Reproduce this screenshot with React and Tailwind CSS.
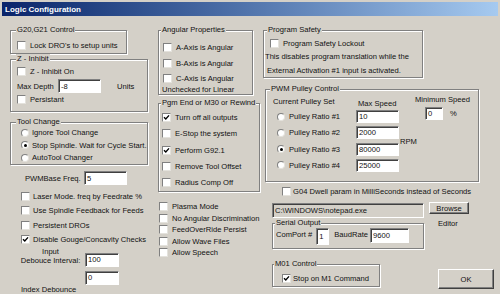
import React from 'react';

const Check = ({ checked }) => (
  <span className="flex w-[9px] h-[9px] shrink-0 items-center justify-center bg-white border border-t-[#808080] border-l-[#808080] border-r-[#e4e2dc] border-b-[#e4e2dc]">
    {checked && (
      <svg viewBox="0 0 7 7" className="w-[7px] h-[7px]">
        <path d="M1 3.2 L2.8 5 L6 1.4" fill="none" stroke="#000" strokeWidth="1.4" />
      </svg>
    )}
  </span>
);

const CheckRow = ({ label, checked, gap = 'gap-[4px]' }) => (
  <div className={`flex items-center whitespace-nowrap ${gap}`}>
    <Check checked={checked} />
    <span>{label}</span>
  </div>
);

const Radio = ({ checked }) => (
  <span className="flex w-[8px] h-[8px] shrink-0 items-center justify-center rounded-full bg-white border border-t-[#808080] border-l-[#808080] border-r-[#e4e2dc] border-b-[#e4e2dc]">
    {checked && <span className="w-[3px] h-[3px] rounded-full bg-black" />}
  </span>
);

const Field = ({ value, className = '' }) => (
  <div className={`flex shrink-0 items-center pl-[2px] whitespace-nowrap border border-t-[#808080] border-l-[#808080] border-r-white border-b-white shadow-[inset_1px_1px_0_#404040] ${className}`}>
    {value}
  </div>
);

const Button = ({ children, className = '' }) => (
  <div className={`flex items-center justify-center bg-[#d4d0c8] border border-t-white border-l-white border-r-[#404040] border-b-[#404040] shadow-[inset_-1px_-1px_0_#808080] ${className}`}>
    {children}
  </div>
);

const Group = ({ label, className = '', labelPos = 'left-[5px]', children }) => (
  <div className={`relative shrink-0 border border-[#808080] shadow-[inset_1px_1px_0_#fff,1px_1px_0_#fff] ${className}`}>
    <span className={`absolute top-[-6px] ${labelPos} bg-[#d4d0c8] px-[1px] whitespace-nowrap`}>{label}</span>
    {children}
  </div>
);

export default function App() {
  return (
    <div className="w-[500px] h-[294px] overflow-hidden bg-[#d4d0c8] text-[#111] text-[7.6px] leading-[9px] font-['Liberation_Sans',Arial,sans-serif]">
      {/* title bar */}
      <div className="mx-[2px] mt-[2px] h-[14px] flex items-center pl-[3px] bg-linear-to-r from-[#0a246a] to-[#a6caf0]">
        <span className="text-white font-bold text-[8px]">Logic Configuration</span>
      </div>

      <div className="flex items-start">
        {/* left column */}
        <div className="ml-[10px] w-[138px] shrink-0 flex flex-col">
          <Group label="G20,G21 Control" className="mt-[14px] w-[117px] h-[24px] pt-[10px] pl-[6px]">
            <CheckRow label="Lock DRO's to setup units" />
          </Group>

          <Group label="Z - Inhibit" className="mt-[5px] w-[138px] h-[53px] pt-[7px] pl-[6px]">
            <CheckRow label="Z - Inhibit On" />
            <div className="mt-[3px] flex items-center">
              <span className="w-[41px] whitespace-nowrap">Max Depth</span>
              <Field value="-8" className="w-[43px] h-[14px] bg-white" />
              <span className="ml-[16px]">Units</span>
            </div>
            <div className="mt-[2px]">
              <CheckRow label="Persistant" />
            </div>
          </Group>

          <Group label="Tool Change" className="mt-[10px] w-[138px] h-[43px] pt-[5px] pl-[10px]">
            <div className="flex flex-col gap-[3.5px]">
              {['Ignore Tool Change', 'Stop Spindle. Wait for Cycle Start.', 'AutoTool Changer'].map((t, i) => (
                <div key={t} className="flex items-center gap-[3px] whitespace-nowrap">
                  <Radio checked={i === 1} />
                  <span>{t}</span>
                </div>
              ))}
            </div>
          </Group>

          <div className="mt-[6px] pl-[15px] flex items-center">
            <span className="w-[59px] whitespace-nowrap">PWMBase Freq.</span>
            <Field value="5" className="w-[43px] h-[14px] bg-white" />
          </div>

          <div className="mt-[7px] pl-[11px] flex flex-col gap-[5.3px]">
            <CheckRow label="Laser Mode. freq by Feedrate %" gap="gap-[3px]" />
            <CheckRow label="Use Spindle Feedback for Feeds" gap="gap-[3px]" />
            <CheckRow label="Persistent DROs" gap="gap-[3px]" />
            <CheckRow label="Disable Gouge/Concavity Checks" checked gap="gap-[3px]" />
          </div>

          <div className="mt-[3px] flex items-start">
            <div className="ml-[10px] w-[61px] flex flex-col items-center whitespace-nowrap">
              <span>Input</span>
              <span>Debouce Interval:</span>
            </div>
            <Field value="100" className="ml-[4px] mt-[6px] w-[34px] h-[14px] bg-white" />
          </div>
          <Field value="0" className="ml-[75px] mt-[4px] w-[34px] h-[14px] bg-white" />
          <span className="ml-[11px] whitespace-nowrap">Index Debounce</span>
        </div>

        {/* middle column */}
        <div className="ml-[10px] w-[102px] shrink-0 flex flex-col">
          <Group label="Angular Properties" labelPos="left-[2px]" className="mt-[14px] w-[95px] h-[65px] pt-[12px] pl-[4px]">
            <div className="flex flex-col gap-[6.5px]">
              <CheckRow label="A-Axis is Angular" />
              <CheckRow label="B-Axis is Angular" />
              <CheckRow label="C-Axis is Angular" />
            </div>
            <div className="mt-[1.5px] ml-[-1px] whitespace-nowrap">Unchecked for Linear</div>
          </Group>

          <Group label="Pgm End or M30 or Rewind" labelPos="left-[2px]" className="mt-[8px] w-[102px] h-[89px] pt-[9px] pl-[3px]">
            <div className="flex flex-col gap-[7.3px]">
              <CheckRow label="Turn off all outputs" checked />
              <CheckRow label="E-Stop the system" />
              <CheckRow label="Perform G92.1" checked />
              <CheckRow label="Remove Tool Offset" />
              <CheckRow label="Radius Comp Off" />
            </div>
          </Group>

          <div className="mt-[10px] pl-[1px] flex flex-col gap-[2.6px]">
            <CheckRow label="Plasma Mode" />
            <CheckRow label="No Angular Discrimination" />
            <CheckRow label="FeedOverRide Persist" />
            <CheckRow label="Allow Wave Files" />
            <CheckRow label="Allow Speech" />
          </div>
        </div>

        {/* right column */}
        <div className="ml-[3px] flex flex-col">
          <Group label="Program Safety" labelPos="left-[3px]" className="mt-[14px] w-[160px] h-[48px] pt-[8px] pl-[6px]">
            <CheckRow label="Program Safety Lockout" />
            <div className="mt-[3.5px] ml-[-5px] whitespace-nowrap">This disables program translation while the</div>
            <div className="mt-[5px] ml-[-3px] whitespace-nowrap">External Activation #1 input is activated.</div>
          </Group>

          <Group label="PWM Pulley Control" labelPos="left-[4px]" className="ml-[2px] mt-[11px] w-[214px] h-[93px] flex items-start">
            <div className="pl-[7px] flex flex-col">
              <div className="mt-[6.5px] h-[13.5px] flex items-start whitespace-nowrap">
                <span className="w-[85px]">Current Pulley Set</span>
                <span className="mt-[2px]">Max Speed</span>
              </div>
              <div className="flex flex-col gap-[3.3px]">
                {[['10', false], ['2000', false], ['80000', true], ['25000', false]].map(([v, on], i) => (
                  <div key={i} className="flex items-center h-[13px]">
                    <div className="w-[83px] pl-[4px] flex items-center gap-[4px] whitespace-nowrap">
                      <Radio checked={on} />
                      <span>Pulley Ratio #{i + 1}</span>
                    </div>
                    <Field value={v} className="w-[43px] h-[13px] bg-white" />
                  </div>
                ))}
              </div>
            </div>
            <div className="ml-[1px] flex flex-col whitespace-nowrap">
              <div className="pl-[15px] mt-[4.5px]">Minimum Speed</div>
              <div className="pl-[15px] mt-[3.5px] flex items-center">
                <Field value="0" className="ml-[10px] w-[18px] h-[13px] bg-white" />
                <span className="ml-[7px]">%</span>
              </div>
              <div className="mt-[16.5px]">RPM</div>
            </div>
          </Group>

          <div className="mt-[5px] ml-[19px]">
            <CheckRow label="G04 Dwell param in MilliSeconds instead of Seconds" gap="gap-[2px]" />
          </div>

          <div className="mt-[6px] ml-[9px] flex items-start">
            <div className="w-[152px] flex flex-col">
              <Field value="C:\WINDOWS\notepad.exe" className="mt-[1px] w-[152px] h-[15px] bg-[#d4d0c8]" />
              <Group label="Serial Output" labelPos="left-[2px]" className="mt-[5px] w-[152px] h-[26px] pt-[4px] pl-[3px] flex items-start whitespace-nowrap">
                <span className="mt-[2px]">ComPort #</span>
                <Field value="1" className="ml-[4px] w-[13px] h-[17px] bg-white" />
                <span className="ml-[5px] mt-[2px]">BaudRate</span>
                <Field value="9600" className="ml-[2px] w-[39px] h-[15px] bg-white" />
              </Group>
              <Group label="M01 Control" labelPos="left-[1px]" className="mt-[15px] w-[108px] h-[23px] pt-[9px] pl-[9px]">
                <CheckRow label="Stop on M1 Command" checked gap="gap-[2px]" />
              </Group>
            </div>
            <div className="ml-[5px] flex flex-col">
              <Button className="w-[40px] h-[12px]">Browse</Button>
              <span className="ml-[9px] mt-[4.5px]">Editor</span>
              <Button className="ml-[9px] mt-[41.5px] w-[56px] h-[20px]">OK</Button>
            </div>
          </div>
        </div>
      </div>
    </div>
  );
}
